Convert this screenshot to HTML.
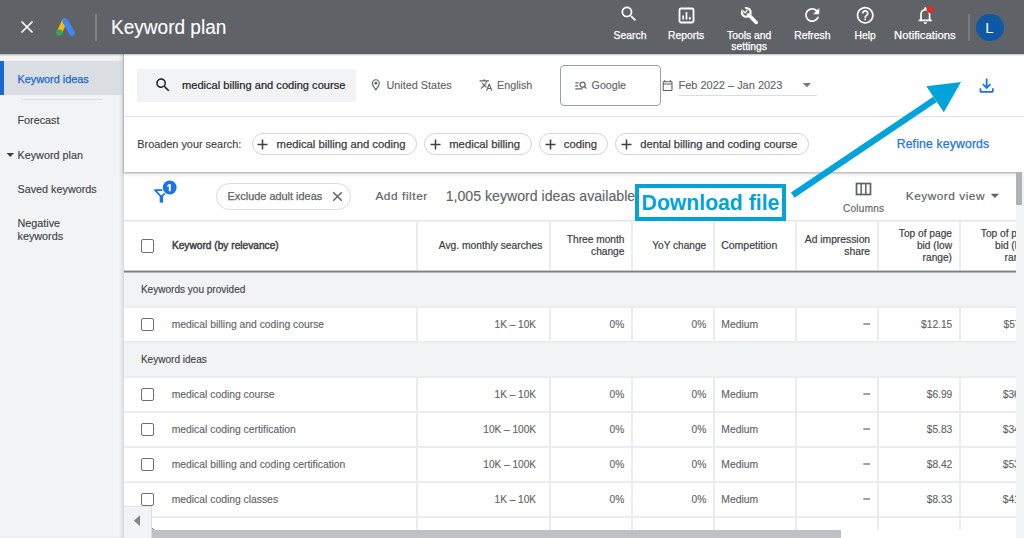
<!DOCTYPE html>
<html><head><meta charset="utf-8"><style>
html,body{margin:0;padding:0;width:1024px;height:538px;overflow:hidden;background:#fff;position:relative;font-family:'Liberation Sans', sans-serif}
.t{position:absolute;white-space:nowrap;line-height:30px;font-family:'Liberation Sans', sans-serif}
</style></head><body>
<div style="position:absolute;left:0px;top:0px;width:1024px;height:54px;background:#5f6368"></div>
<div style="position:absolute;left:0px;top:54px;width:1024px;height:2px;background:linear-gradient(rgba(60,64,67,.35),rgba(60,64,67,0));z-index:4"></div>
<svg style="position:absolute;left:19px;top:19px;" width="16" height="16" viewBox="0 0 16 16"><path d="M2.5 2.5L13.5 13.5M13.5 2.5L2.5 13.5" stroke="#fff" stroke-width="1.7" fill="none"/></svg>
<svg style="position:absolute;left:55px;top:17px;" width="22" height="20" viewBox="0 0 22 20"><path d="M9.4 4.3L4.6 15" stroke="#fbbc04" stroke-width="5.4" stroke-linecap="round"/><path d="M10.3 4.3L16.9 15.9" stroke="#4285f4" stroke-width="5.8" stroke-linecap="round"/><circle cx="4.3" cy="15.4" r="3.2" fill="#34a853"/></svg>
<div style="position:absolute;left:95px;top:14px;width:2px;height:27px;background:#7c8085"></div>
<div class="t" style="left:111px;top:12px;font-size:20px;color:#ffffff;font-weight:normal;-webkit-text-stroke:0.12px #ffffff;transform:scaleX(0.952);transform-origin:0 0;">Keyword plan</div>
<div class="t" style="left:480px;width:300px;text-align:center;top:20.5px;font-size:10.35px;color:#ffffff;font-weight:normal;-webkit-text-stroke:0.25px #ffffff;">Search</div>
<svg style="position:absolute;left:619.4px;top:4.4px;" width="20" height="20" viewBox="0 0 24 24"><path fill="#fff" d="M15.5 14h-.79l-.28-.27C15.41 12.59 16 11.11 16 9.5 16 5.91 13.09 3 9.5 3S3 5.91 3 9.5 5.91 16 9.5 16c1.61 0 3.09-.59 4.23-1.57l.27.28v.79l5 4.99L20.49 19l-4.99-5zm-6 0C7.01 14 5 11.99 5 9.5S7.01 5 9.5 5 14 7.01 14 9.5 11.99 14 9.5 14z"/></svg>
<div class="t" style="left:536.1px;width:300px;text-align:center;top:20.5px;font-size:10.35px;color:#ffffff;font-weight:normal;-webkit-text-stroke:0.25px #ffffff;">Reports</div>
<svg style="position:absolute;left:678px;top:7px;" width="17" height="17" viewBox="0 0 17 17"><rect x="1.5" y="1.5" width="14" height="14" rx="1.5" stroke="#fff" stroke-width="1.8" fill="none"/><path d="M5.2 12.5V8.5M8.5 12.5V5M11.8 12.5V10" stroke="#fff" stroke-width="1.7"/></svg>
<div class="t" style="left:599.2px;width:300px;text-align:center;top:20.5px;font-size:10.35px;color:#ffffff;font-weight:normal;-webkit-text-stroke:0.25px #ffffff;">Tools and</div>
<div class="t" style="left:599.2px;width:300px;text-align:center;top:32px;font-size:10.35px;color:#ffffff;font-weight:normal;-webkit-text-stroke:0.25px #ffffff;">settings</div>
<svg style="position:absolute;left:736px;top:3px;" width="28" height="25" viewBox="0 0 28 25"><circle cx="10.3" cy="9.4" r="4.3" stroke="#fff" stroke-width="2.3" fill="none"/><path d="M12.6 11.8L20.2 19.4" stroke="#fff" stroke-width="3.6" stroke-linecap="round"/><path d="M7.2 2.5L3.2 6.5L8.6 10.3L11 8Z" fill="#5f6368"/><path d="M5.5 6.8L9.3 9.8L11.4 6.9" stroke="#fff" stroke-width="1.3" fill="none"/></svg>
<div class="t" style="left:662.3px;width:300px;text-align:center;top:20.5px;font-size:10.35px;color:#ffffff;font-weight:normal;-webkit-text-stroke:0.25px #ffffff;">Refresh</div>
<svg style="position:absolute;left:801.7px;top:4.6px;width:14.4px;height:14.1px;left:805.3px;top:8.2px" width="18" height="18" viewBox="4 4 16 16"><path fill="#fff" d="M17.65 6.35C16.2 4.9 14.21 4 12 4c-4.42 0-7.99 3.58-7.99 8s3.57 8 7.99 8c3.73 0 6.84-2.55 7.73-6h-2.08c-.82 2.33-3.04 4-5.65 4-3.31 0-6-2.69-6-6s2.69-6 6-6c1.66 0 3.14.69 4.22 1.78L13 11h7V4l-2.35 2.35z"/></svg>
<div class="t" style="left:715.2px;width:300px;text-align:center;top:20.5px;font-size:10.35px;color:#ffffff;font-weight:normal;-webkit-text-stroke:0.25px #ffffff;">Help</div>
<svg style="position:absolute;left:855.3px;top:5.1px;" width="20.4" height="20.4" viewBox="0 0 24 24"><path fill="#fff" d="M11 18h2v-2h-2v2zm1-16C6.48 2 2 6.48 2 12s4.48 10 10 10 10-4.48 10-10S17.52 2 12 2zm0 18c-4.41 0-8-3.59-8-8s3.59-8 8-8 8 3.59 8 8-3.59 8-8 8zm0-14c-2.21 0-4 1.790-4 4h2c0-1.1.9-2 2-2s2 .9 2 2c0 2-3 1.75-3 5h2c0-2.25 3-2.5 3-5 0-2.210-1.79-4-4-4z"/></svg>
<div class="t" style="left:774.9px;width:300px;text-align:center;top:19.5px;font-size:11.3px;color:#ffffff;font-weight:normal;-webkit-text-stroke:0.25px #ffffff;">Notifications</div>
<svg style="position:absolute;left:914.6px;top:5.1px;" width="20.6" height="20.6" viewBox="0 0 24 24"><path fill="#fff" d="M12 22c1.1 0 2-.9 2-2h-4c0 1.1.89 2 2 2zm6-6v-5c0-3.07-1.64-5.64-4.5-6.32V4c0-.83-.67-1.5-1.5-1.5s-1.5.67-1.5 1.5v.68C7.630 5.36 6 7.92 6 11v5l-2 2v1h16v-1l-2-2zm-2 1H8v-6c0-2.48 1.51-4.5 4-4.5s4 2.02 4 4.5v6z"/></svg>
<svg style="position:absolute;left:925px;top:4px;" width="11" height="11" viewBox="0 0 11 11"><circle cx="5.2" cy="5.3" r="3.6" fill="#d93025"/></svg>
<div style="position:absolute;left:967.5px;top:14px;width:2.0px;height:27px;background:#777b80"></div>
<div style="position:absolute;left:976px;top:13.5px;width:27.5px;height:27.5px;background:#0f58a5;border-radius:50%"></div>
<div class="t" style="left:839.3px;width:300px;text-align:center;top:12.600000000000001px;font-size:15px;color:#ffffff;font-weight:normal;">L</div>
<div style="position:absolute;left:0px;top:54px;width:124px;height:484px;background:#f1f3f4;box-shadow:inset -3px 0 4px -2px rgba(60,64,67,.22)"></div>
<div style="position:absolute;left:0px;top:61px;width:122px;height:34px;background:#dadde1"></div>
<div style="position:absolute;left:0px;top:61px;width:3.5px;height:34px;background:#1967d2"></div>
<div class="t" style="left:17.5px;top:63.5px;font-size:10.87px;color:#1967d2;font-weight:normal;-webkit-text-stroke:0.25px #1967d2;">Keyword ideas</div>
<div style="position:absolute;left:20.5px;top:99px;width:81.5px;height:1px;background:#dadce0"></div>
<div class="t" style="left:17.5px;top:105.1px;font-size:10.8px;color:#3c4043;font-weight:normal;-webkit-text-stroke:0.12px #3c4043;">Forecast</div>
<svg style="position:absolute;left:6px;top:152px;" width="9" height="6" viewBox="0 0 9 6"><path d="M0.5 1H8L4.25 5Z" fill="#3c4043"/></svg>
<div class="t" style="left:17.5px;top:139.5px;font-size:10.8px;color:#3c4043;font-weight:normal;-webkit-text-stroke:0.12px #3c4043;">Keyword plan</div>
<div class="t" style="left:17.5px;top:173.7px;font-size:10.8px;color:#3c4043;font-weight:normal;-webkit-text-stroke:0.12px #3c4043;">Saved keywords</div>
<div class="t" style="left:17.5px;top:207.9px;font-size:10.8px;color:#3c4043;font-weight:normal;-webkit-text-stroke:0.12px #3c4043;">Negative</div>
<div class="t" style="left:17.5px;top:221.1px;font-size:10.8px;color:#3c4043;font-weight:normal;-webkit-text-stroke:0.12px #3c4043;">keywords</div>
<div style="position:absolute;left:124px;top:54px;width:900px;height:118px;background:#fff;box-shadow:0 1px 2px rgba(60,64,67,.35),0 1px 4px 1px rgba(60,64,67,.15);z-index:1"></div>
<div style="position:absolute;left:137px;top:68.5px;width:219px;height:33.5px;background:#f1f3f4;z-index:1"></div>
<svg style="position:absolute;left:154.3px;top:76.3px;z-index:2;" width="18" height="18" viewBox="0 0 24 24"><path fill="#202124" d="M15.5 14h-.79l-.28-.27C15.41 12.59 16 11.11 16 9.5 16 5.91 13.09 3 9.5 3S3 5.91 3 9.5 5.91 16 9.5 16c1.61 0 3.09-.59 4.23-1.57l.27.28v.79l5 4.99L20.49 19l-4.99-5zm-6 0C7.01 14 5 11.99 5 9.5S7.01 5 9.5 5 14 7.01 14 9.5 11.99 14 9.5 14z"/></svg>
<div class="t" style="left:182px;top:69.9px;font-size:11.1px;color:#202124;font-weight:normal;-webkit-text-stroke:0.2px #202124;z-index:2;">medical billing and coding course</div>
<svg style="position:absolute;left:368.6px;top:78.3px;z-index:2;" width="13.7" height="13.7" viewBox="0 0 24 24"><path fill="#5f6368" d="M12 2C8.13 2 5 5.13 5 9c0 5.25 7 13 7 13s7-7.75 7-13c0-3.87-3.13-7-7-7zM7 9c0-2.76 2.24-5 5-5s5 2.24 5 5c0 2.88-2.88 7.19-5 9.88C9.92 16.210 7 11.85 7 9z"/><circle cx="12" cy="9" r="2.5" fill="#5f6368"/></svg>
<div class="t" style="left:386.4px;top:70.3px;font-size:10.89px;color:#5f6368;font-weight:normal;-webkit-text-stroke:0.12px #5f6368;z-index:2;">United States</div>
<svg style="position:absolute;left:479.4px;top:78.3px;z-index:2;" width="14" height="14" viewBox="0 0 24 24"><path fill="#5f6368" d="M12.87 15.07l-2.54-2.51.03-.03c1.74-1.94 2.98-4.17 3.71-6.53H17V4h-7V2H8v2H1v1.99h11.17C11.5 7.92 10.44 9.75 9 11.35 8.07 10.32 7.3 9.19 6.69 8h-2c.73 1.63 1.73 3.17 2.98 4.56l-5.09 5.02L4 19l5-5 3.11 3.110.76-2.04zM18.5 10h-2L12 22h2l1.12-3h4.75L21 22h2l-4.5-12zm-2.62 7l1.62-4.33L19.12 17h-3.240z"/></svg>
<div class="t" style="left:497.1px;top:70.3px;font-size:10.73px;color:#5f6368;font-weight:normal;-webkit-text-stroke:0.12px #5f6368;z-index:2;">English</div>
<div style="position:absolute;left:560px;top:65px;width:101px;height:40.599999999999994px;border:1px solid #9aa0a6;border-radius:4px;box-sizing:border-box;z-index:2"></div>
<svg style="position:absolute;left:574px;top:80px;z-index:2;" width="14" height="11" viewBox="0 0 14 11"><path d="M1.3 2.9H4.6M1.3 5.85H4.2M1.3 8.8H8.6" stroke="#5f6368" stroke-width="1.2"/><circle cx="8.6" cy="4.7" r="2.5" stroke="#5f6368" stroke-width="1.25" fill="none"/><path d="M10.3 6.4L12.4 8.6" stroke="#5f6368" stroke-width="1.3"/></svg>
<div class="t" style="left:591.6px;top:70.3px;font-size:10.67px;color:#5f6368;font-weight:normal;-webkit-text-stroke:0.12px #5f6368;z-index:2;">Google</div>
<svg style="position:absolute;left:661.4px;top:78.5px;z-index:2;" width="13.2" height="13.2" viewBox="0 0 24 24"><path fill="#5f6368" d="M19 4h-1V2h-2v2H8V2H6v2H5c-1.11 0-1.99.9-1.99 2L3 20c0 1.1.89 2 2 2h14c1.1 0 2-.9 2-2V6c0-1.1-.9-2-2-2zm0 16H5V10h14v10zm0-12H5V6h14v2z"/></svg>
<div class="t" style="left:678.5px;top:70.3px;font-size:10.99px;color:#5f6368;font-weight:normal;-webkit-text-stroke:0.12px #5f6368;z-index:2;">Feb 2022 – Jan 2023</div>
<svg style="position:absolute;left:802px;top:82px;z-index:2;" width="10" height="6" viewBox="0 0 10 6"><path d="M0.8 1H9L4.9 5.2Z" fill="#757575"/></svg>
<div style="position:absolute;left:678.5px;top:95px;width:138.5px;height:1px;background:#dadce0;z-index:2"></div>
<svg style="position:absolute;left:975.8px;top:74.6px;z-index:2;" width="21.3" height="21.3" viewBox="0 -960 960 960"><path fill="#1a73e8" d="M480-320 280-520l56-58 104 104v-326h80v326l104-104 56 58-200 200ZM240-160q-33 0-56.5-23.5T160-240v-120h80v120h480v-120h80v120q0 33-23.5 56.5T720-160H240Z"/></svg>
<div style="position:absolute;left:124px;top:116px;width:900px;height:1px;background:#e0e2e6;z-index:2"></div>
<div class="t" style="left:137.3px;top:129px;font-size:10.88px;color:#3c4043;font-weight:normal;-webkit-text-stroke:0.12px #3c4043;z-index:2;">Broaden your search:</div>
<div style="position:absolute;left:251.6px;top:133.3px;width:165.50000000000003px;height:22.099999999999994px;border:1px solid #d3d5d9;border-radius:12px;box-sizing:border-box;z-index:2"></div>
<svg style="position:absolute;left:257.09999999999997px;top:138.6px;z-index:2;" width="12" height="12" viewBox="0 0 12 12"><path d="M5.5 0.5V10.5M0.5 5.5H10.5" stroke="#3c4043" stroke-width="1.5"/></svg>
<div class="t" style="left:276.5px;top:128.5px;font-size:11.28px;color:#3c4043;font-weight:normal;-webkit-text-stroke:0.25px #3c4043;z-index:2;">medical billing and coding</div>
<div style="position:absolute;left:424.2px;top:133.3px;width:107.59999999999997px;height:22.099999999999994px;border:1px solid #d3d5d9;border-radius:12px;box-sizing:border-box;z-index:2"></div>
<svg style="position:absolute;left:429.9px;top:138.6px;z-index:2;" width="12" height="12" viewBox="0 0 12 12"><path d="M5.5 0.5V10.5M0.5 5.5H10.5" stroke="#3c4043" stroke-width="1.5"/></svg>
<div class="t" style="left:449.2px;top:128.5px;font-size:11.3px;color:#3c4043;font-weight:normal;-webkit-text-stroke:0.25px #3c4043;z-index:2;">medical billing</div>
<div style="position:absolute;left:539px;top:133.3px;width:69.39999999999998px;height:22.099999999999994px;border:1px solid #d3d5d9;border-radius:12px;box-sizing:border-box;z-index:2"></div>
<svg style="position:absolute;left:544.6px;top:138.6px;z-index:2;" width="12" height="12" viewBox="0 0 12 12"><path d="M5.5 0.5V10.5M0.5 5.5H10.5" stroke="#3c4043" stroke-width="1.5"/></svg>
<div class="t" style="left:563.8px;top:128.5px;font-size:11.27px;color:#3c4043;font-weight:normal;-webkit-text-stroke:0.25px #3c4043;z-index:2;">coding</div>
<div style="position:absolute;left:615.2px;top:133.3px;width:193.39999999999998px;height:22.099999999999994px;border:1px solid #d3d5d9;border-radius:12px;box-sizing:border-box;z-index:2"></div>
<svg style="position:absolute;left:620.7px;top:138.6px;z-index:2;" width="12" height="12" viewBox="0 0 12 12"><path d="M5.5 0.5V10.5M0.5 5.5H10.5" stroke="#3c4043" stroke-width="1.5"/></svg>
<div class="t" style="left:640.2px;top:128.5px;font-size:11.22px;color:#3c4043;font-weight:normal;-webkit-text-stroke:0.25px #3c4043;z-index:2;">dental billing and coding course</div>
<div class="t" style="left:896.7px;top:129px;font-size:12.2px;color:#1a73e8;font-weight:normal;-webkit-text-stroke:0.25px #1a73e8;letter-spacing:0.17px;z-index:2;">Refine keywords</div>
<div style="position:absolute;left:124px;top:172px;width:892px;height:366px;background:#fff"></div>
<svg style="position:absolute;left:148px;top:178px;" width="34" height="30" viewBox="0 0 34 30"><path d="M7 12.2H20L13.4 18.8Z" stroke="#1a73e8" stroke-width="1.8" fill="none" stroke-linejoin="round"/><rect x="11.7" y="18" width="3.4" height="6.6" fill="#1a73e8"/><circle cx="21.7" cy="9.5" r="7.9" fill="#fff"/><circle cx="21.7" cy="9.5" r="6.9" fill="#1a73e8"/><path d="M20.8 13.3V8.3L19.1 8.9V7.4L21.1 6.1H22.8V13.3Z" fill="#fff"/></svg>
<div style="position:absolute;left:216px;top:183px;width:134.5px;height:27px;border:1px solid #dadce0;border-radius:14px;box-sizing:border-box"></div>
<div class="t" style="left:227.6px;top:180.5px;font-size:10.92px;color:#5f6368;font-weight:normal;-webkit-text-stroke:0.25px #5f6368;">Exclude adult ideas</div>
<svg style="position:absolute;left:332px;top:191px;" width="11" height="11" viewBox="0 0 11 11"><path d="M1.2 1.2L9.8 9.8M9.8 1.2L1.2 9.8" stroke="#5f6368" stroke-width="1.5"/></svg>
<div class="t" style="left:375.4px;top:181px;font-size:11.8px;color:#5f6368;font-weight:normal;-webkit-text-stroke:0.2px #5f6368;letter-spacing:0.59px;">Add filter</div>
<div class="t" style="left:445.7px;top:181px;font-size:14.15px;color:#5f6368;font-weight:normal;-webkit-text-stroke:0.12px #5f6368;">1,005 keyword ideas available</div>
<svg style="position:absolute;left:855px;top:182px;" width="17" height="14" viewBox="0 0 17 14"><rect x="1.5" y="1.5" width="14" height="11" stroke="#5f6368" stroke-width="1.7" fill="none"/><path d="M6.2 1.5V12.5M10.8 1.5V12.5" stroke="#5f6368" stroke-width="1.5"/></svg>
<div class="t" style="left:713.7px;width:300px;text-align:center;top:193.8px;font-size:10px;color:#5f6368;font-weight:normal;-webkit-text-stroke:0.15px #5f6368;letter-spacing:0.27px;">Columns</div>
<div class="t" style="left:905.8px;top:181px;font-size:11.8px;color:#5f6368;font-weight:normal;-webkit-text-stroke:0.2px #5f6368;letter-spacing:0.53px;">Keyword view</div>
<svg style="position:absolute;left:990px;top:193px;" width="10" height="6" viewBox="0 0 10 6"><path d="M0.8 0.8H9L4.9 5Z" fill="#5f6368"/></svg>
<div style="position:absolute;left:124px;top:220px;width:892px;height:1px;background:#e3e4e8"></div>
<div style="position:absolute;left:124px;top:221px;width:892px;height:1px;background:#f0f1f3"></div>
<div style="position:absolute;left:1015.5px;top:172px;width:8.5px;height:366px;background:#f1f3f4"></div>
<div style="position:absolute;left:1015.5px;top:172px;width:6.5px;height:33px;background:#b0b2b5"></div>
<div style="position:absolute;left:416px;top:222px;width:2px;height:48px;background:#ebecef"></div>
<div style="position:absolute;left:549px;top:222px;width:2px;height:48px;background:#ebecef"></div>
<div style="position:absolute;left:631px;top:222px;width:2px;height:48px;background:#ebecef"></div>
<div style="position:absolute;left:713px;top:222px;width:2px;height:48px;background:#ebecef"></div>
<div style="position:absolute;left:795px;top:222px;width:2px;height:48px;background:#ebecef"></div>
<div style="position:absolute;left:877px;top:222px;width:2px;height:48px;background:#ebecef"></div>
<div style="position:absolute;left:959px;top:222px;width:2px;height:48px;background:#ebecef"></div>
<div style="position:absolute;left:141px;top:239.2px;width:13.400000000000006px;height:13.400000000000006px;border:1.8px solid #6f7174;border-radius:2px;box-sizing:border-box"></div>
<div class="t" style="left:171.9px;top:230.9px;font-size:10.18px;color:#3c4043;font-weight:normal;-webkit-text-stroke:0.45px #3c4043;">Keyword (by relevance)</div>
<div class="t" style="right:481.70000000000005px;text-align:right;top:231.4px;font-size:10.25px;color:#3c4043;font-weight:normal;-webkit-text-stroke:0.2px #3c4043;">Avg. monthly searches</div>
<div class="t" style="right:399.6px;text-align:right;top:225.3px;font-size:10.16px;color:#3c4043;font-weight:normal;-webkit-text-stroke:0.2px #3c4043;">Three month</div>
<div class="t" style="right:399.6px;text-align:right;top:236.8px;font-size:10.16px;color:#3c4043;font-weight:normal;-webkit-text-stroke:0.2px #3c4043;">change</div>
<div class="t" style="right:317.9px;text-align:right;top:231.4px;font-size:10.1px;color:#3c4043;font-weight:normal;-webkit-text-stroke:0.2px #3c4043;">YoY change</div>
<div class="t" style="left:721.2px;top:230.4px;font-size:10.5px;color:#3c4043;font-weight:normal;-webkit-text-stroke:0.2px #3c4043;">Competition</div>
<div class="t" style="right:153.89999999999998px;text-align:right;top:225.4px;font-size:10.32px;color:#3c4043;font-weight:normal;-webkit-text-stroke:0.2px #3c4043;">Ad impression</div>
<div class="t" style="right:153.89999999999998px;text-align:right;top:236.9px;font-size:10.32px;color:#3c4043;font-weight:normal;-webkit-text-stroke:0.2px #3c4043;">share</div>
<div class="t" style="right:72px;text-align:right;top:219.1px;font-size:10.18px;color:#3c4043;font-weight:normal;-webkit-text-stroke:0.2px #3c4043;">Top of page</div>
<div class="t" style="right:72px;text-align:right;top:231px;font-size:10.18px;color:#3c4043;font-weight:normal;-webkit-text-stroke:0.2px #3c4043;">bid (low</div>
<div class="t" style="right:72px;text-align:right;top:243.10000000000002px;font-size:10.18px;color:#3c4043;font-weight:normal;-webkit-text-stroke:0.2px #3c4043;">range)</div>
<div class="t" style="right:-10px;text-align:right;top:219.1px;font-size:10.18px;color:#3c4043;font-weight:normal;-webkit-text-stroke:0.2px #3c4043;">Top of page</div>
<div class="t" style="right:-10px;text-align:right;top:231px;font-size:10.18px;color:#3c4043;font-weight:normal;-webkit-text-stroke:0.2px #3c4043;">bid (high</div>
<div class="t" style="right:-10px;text-align:right;top:243.10000000000002px;font-size:10.18px;color:#3c4043;font-weight:normal;-webkit-text-stroke:0.2px #3c4043;">range)</div>
<div style="position:absolute;left:124px;top:270px;width:892px;height:3px;background:linear-gradient(#c9cbce 0 1px,#7b7f84 1px 2px,#b3b6b9 2px 3px)"></div>
<div style="position:absolute;left:124px;top:273px;width:892px;height:33px;background:#f1f3f4"></div>
<div class="t" style="left:140.9px;top:275.2px;font-size:10.06px;color:#3c4043;font-weight:normal;-webkit-text-stroke:0.12px #3c4043;">Keywords you provided</div>
<div style="position:absolute;left:124px;top:306px;width:892px;height:2px;background:#ebecef"></div>
<div style="position:absolute;left:416px;top:308px;width:2px;height:33px;background:#ebecef"></div>
<div style="position:absolute;left:549px;top:308px;width:2px;height:33px;background:#ebecef"></div>
<div style="position:absolute;left:631px;top:308px;width:2px;height:33px;background:#ebecef"></div>
<div style="position:absolute;left:713px;top:308px;width:2px;height:33px;background:#ebecef"></div>
<div style="position:absolute;left:795px;top:308px;width:2px;height:33px;background:#ebecef"></div>
<div style="position:absolute;left:877px;top:308px;width:2px;height:33px;background:#ebecef"></div>
<div style="position:absolute;left:959px;top:308px;width:2px;height:33px;background:#ebecef"></div>
<div style="position:absolute;left:141px;top:317.7px;width:13.400000000000006px;height:13.399999999999977px;border:1.8px solid #6f7174;border-radius:2px;box-sizing:border-box"></div>
<div class="t" style="left:171.7px;top:309.8px;font-size:10.35px;color:#5f6368;font-weight:normal;-webkit-text-stroke:0.12px #5f6368;">medical billing and coding course</div>
<div class="t" style="right:488px;text-align:right;top:309.8px;font-size:10.09px;color:#5f6368;font-weight:normal;-webkit-text-stroke:0.12px #5f6368;">1K – 10K</div>
<div class="t" style="right:399.70000000000005px;text-align:right;top:309.8px;font-size:10.2px;color:#5f6368;font-weight:normal;-webkit-text-stroke:0.12px #5f6368;">0%</div>
<div class="t" style="right:317.70000000000005px;text-align:right;top:309.8px;font-size:10.2px;color:#5f6368;font-weight:normal;-webkit-text-stroke:0.12px #5f6368;">0%</div>
<div class="t" style="left:721.3px;top:309.8px;font-size:10.35px;color:#5f6368;font-weight:normal;-webkit-text-stroke:0.12px #5f6368;">Medium</div>
<svg style="position:absolute;left:860px;top:321px;" width="14" height="6" viewBox="0 0 14 6"><path d="M3.3 3H10.1" stroke="#5f6368" stroke-width="1.2"/></svg>
<div class="t" style="right:71.70000000000005px;text-align:right;top:309.8px;font-size:10.23px;color:#5f6368;font-weight:normal;-webkit-text-stroke:0.12px #5f6368;">$12.15</div>
<div class="t" style="right:-10px;text-align:right;top:309.8px;font-size:10.23px;color:#5f6368;font-weight:normal;-webkit-text-stroke:0.12px #5f6368;">$57.11</div>
<div style="position:absolute;left:124px;top:342px;width:892px;height:34px;background:#f1f3f4"></div>
<div class="t" style="left:140.9px;top:344.6px;font-size:10.06px;color:#3c4043;font-weight:normal;-webkit-text-stroke:0.12px #3c4043;">Keyword ideas</div>
<div style="position:absolute;left:124px;top:341px;width:892px;height:2px;background:#ebecef"></div>
<div style="position:absolute;left:124px;top:376px;width:892px;height:2px;background:#ebecef"></div>
<div style="position:absolute;left:416px;top:378px;width:2px;height:33px;background:#ebecef"></div>
<div style="position:absolute;left:549px;top:378px;width:2px;height:33px;background:#ebecef"></div>
<div style="position:absolute;left:631px;top:378px;width:2px;height:33px;background:#ebecef"></div>
<div style="position:absolute;left:713px;top:378px;width:2px;height:33px;background:#ebecef"></div>
<div style="position:absolute;left:795px;top:378px;width:2px;height:33px;background:#ebecef"></div>
<div style="position:absolute;left:877px;top:378px;width:2px;height:33px;background:#ebecef"></div>
<div style="position:absolute;left:959px;top:378px;width:2px;height:33px;background:#ebecef"></div>
<div style="position:absolute;left:141px;top:387.7px;width:13.400000000000006px;height:13.399999999999977px;border:1.8px solid #6f7174;border-radius:2px;box-sizing:border-box"></div>
<div class="t" style="left:171.7px;top:379.8px;font-size:10.35px;color:#5f6368;font-weight:normal;-webkit-text-stroke:0.12px #5f6368;">medical coding course</div>
<div class="t" style="right:488px;text-align:right;top:379.8px;font-size:10.09px;color:#5f6368;font-weight:normal;-webkit-text-stroke:0.12px #5f6368;">1K – 10K</div>
<div class="t" style="right:399.70000000000005px;text-align:right;top:379.8px;font-size:10.2px;color:#5f6368;font-weight:normal;-webkit-text-stroke:0.12px #5f6368;">0%</div>
<div class="t" style="right:317.70000000000005px;text-align:right;top:379.8px;font-size:10.2px;color:#5f6368;font-weight:normal;-webkit-text-stroke:0.12px #5f6368;">0%</div>
<div class="t" style="left:721.3px;top:379.8px;font-size:10.35px;color:#5f6368;font-weight:normal;-webkit-text-stroke:0.12px #5f6368;">Medium</div>
<svg style="position:absolute;left:860px;top:391px;" width="14" height="6" viewBox="0 0 14 6"><path d="M3.3 3H10.1" stroke="#5f6368" stroke-width="1.2"/></svg>
<div class="t" style="right:71.70000000000005px;text-align:right;top:379.8px;font-size:10.23px;color:#5f6368;font-weight:normal;-webkit-text-stroke:0.12px #5f6368;">$6.99</div>
<div class="t" style="right:-10px;text-align:right;top:379.8px;font-size:10.23px;color:#5f6368;font-weight:normal;-webkit-text-stroke:0.12px #5f6368;">$36.02</div>
<div style="position:absolute;left:124px;top:411px;width:892px;height:2px;background:#ebecef"></div>
<div style="position:absolute;left:416px;top:413px;width:2px;height:33px;background:#ebecef"></div>
<div style="position:absolute;left:549px;top:413px;width:2px;height:33px;background:#ebecef"></div>
<div style="position:absolute;left:631px;top:413px;width:2px;height:33px;background:#ebecef"></div>
<div style="position:absolute;left:713px;top:413px;width:2px;height:33px;background:#ebecef"></div>
<div style="position:absolute;left:795px;top:413px;width:2px;height:33px;background:#ebecef"></div>
<div style="position:absolute;left:877px;top:413px;width:2px;height:33px;background:#ebecef"></div>
<div style="position:absolute;left:959px;top:413px;width:2px;height:33px;background:#ebecef"></div>
<div style="position:absolute;left:141px;top:422.7px;width:13.400000000000006px;height:13.399999999999977px;border:1.8px solid #6f7174;border-radius:2px;box-sizing:border-box"></div>
<div class="t" style="left:171.7px;top:414.8px;font-size:10.35px;color:#5f6368;font-weight:normal;-webkit-text-stroke:0.12px #5f6368;">medical coding certification</div>
<div class="t" style="right:488px;text-align:right;top:414.8px;font-size:10.09px;color:#5f6368;font-weight:normal;-webkit-text-stroke:0.12px #5f6368;">10K – 100K</div>
<div class="t" style="right:399.70000000000005px;text-align:right;top:414.8px;font-size:10.2px;color:#5f6368;font-weight:normal;-webkit-text-stroke:0.12px #5f6368;">0%</div>
<div class="t" style="right:317.70000000000005px;text-align:right;top:414.8px;font-size:10.2px;color:#5f6368;font-weight:normal;-webkit-text-stroke:0.12px #5f6368;">0%</div>
<div class="t" style="left:721.3px;top:414.8px;font-size:10.35px;color:#5f6368;font-weight:normal;-webkit-text-stroke:0.12px #5f6368;">Medium</div>
<svg style="position:absolute;left:860px;top:426px;" width="14" height="6" viewBox="0 0 14 6"><path d="M3.3 3H10.1" stroke="#5f6368" stroke-width="1.2"/></svg>
<div class="t" style="right:71.70000000000005px;text-align:right;top:414.8px;font-size:10.23px;color:#5f6368;font-weight:normal;-webkit-text-stroke:0.12px #5f6368;">$5.83</div>
<div class="t" style="right:-10px;text-align:right;top:414.8px;font-size:10.23px;color:#5f6368;font-weight:normal;-webkit-text-stroke:0.12px #5f6368;">$34.40</div>
<div style="position:absolute;left:124px;top:446px;width:892px;height:2px;background:#ebecef"></div>
<div style="position:absolute;left:416px;top:448px;width:2px;height:33px;background:#ebecef"></div>
<div style="position:absolute;left:549px;top:448px;width:2px;height:33px;background:#ebecef"></div>
<div style="position:absolute;left:631px;top:448px;width:2px;height:33px;background:#ebecef"></div>
<div style="position:absolute;left:713px;top:448px;width:2px;height:33px;background:#ebecef"></div>
<div style="position:absolute;left:795px;top:448px;width:2px;height:33px;background:#ebecef"></div>
<div style="position:absolute;left:877px;top:448px;width:2px;height:33px;background:#ebecef"></div>
<div style="position:absolute;left:959px;top:448px;width:2px;height:33px;background:#ebecef"></div>
<div style="position:absolute;left:141px;top:457.7px;width:13.400000000000006px;height:13.399999999999977px;border:1.8px solid #6f7174;border-radius:2px;box-sizing:border-box"></div>
<div class="t" style="left:171.7px;top:449.8px;font-size:10.35px;color:#5f6368;font-weight:normal;-webkit-text-stroke:0.12px #5f6368;">medical billing and coding certification</div>
<div class="t" style="right:488px;text-align:right;top:449.8px;font-size:10.09px;color:#5f6368;font-weight:normal;-webkit-text-stroke:0.12px #5f6368;">10K – 100K</div>
<div class="t" style="right:399.70000000000005px;text-align:right;top:449.8px;font-size:10.2px;color:#5f6368;font-weight:normal;-webkit-text-stroke:0.12px #5f6368;">0%</div>
<div class="t" style="right:317.70000000000005px;text-align:right;top:449.8px;font-size:10.2px;color:#5f6368;font-weight:normal;-webkit-text-stroke:0.12px #5f6368;">0%</div>
<div class="t" style="left:721.3px;top:449.8px;font-size:10.35px;color:#5f6368;font-weight:normal;-webkit-text-stroke:0.12px #5f6368;">Medium</div>
<svg style="position:absolute;left:860px;top:461px;" width="14" height="6" viewBox="0 0 14 6"><path d="M3.3 3H10.1" stroke="#5f6368" stroke-width="1.2"/></svg>
<div class="t" style="right:71.70000000000005px;text-align:right;top:449.8px;font-size:10.23px;color:#5f6368;font-weight:normal;-webkit-text-stroke:0.12px #5f6368;">$8.42</div>
<div class="t" style="right:-10px;text-align:right;top:449.8px;font-size:10.23px;color:#5f6368;font-weight:normal;-webkit-text-stroke:0.12px #5f6368;">$53.01</div>
<div style="position:absolute;left:124px;top:481px;width:892px;height:2px;background:#ebecef"></div>
<div style="position:absolute;left:416px;top:483px;width:2px;height:33px;background:#ebecef"></div>
<div style="position:absolute;left:549px;top:483px;width:2px;height:33px;background:#ebecef"></div>
<div style="position:absolute;left:631px;top:483px;width:2px;height:33px;background:#ebecef"></div>
<div style="position:absolute;left:713px;top:483px;width:2px;height:33px;background:#ebecef"></div>
<div style="position:absolute;left:795px;top:483px;width:2px;height:33px;background:#ebecef"></div>
<div style="position:absolute;left:877px;top:483px;width:2px;height:33px;background:#ebecef"></div>
<div style="position:absolute;left:959px;top:483px;width:2px;height:33px;background:#ebecef"></div>
<div style="position:absolute;left:141px;top:492.7px;width:13.400000000000006px;height:13.399999999999977px;border:1.8px solid #6f7174;border-radius:2px;box-sizing:border-box"></div>
<div class="t" style="left:171.7px;top:484.8px;font-size:10.35px;color:#5f6368;font-weight:normal;-webkit-text-stroke:0.12px #5f6368;">medical coding classes</div>
<div class="t" style="right:488px;text-align:right;top:484.8px;font-size:10.09px;color:#5f6368;font-weight:normal;-webkit-text-stroke:0.12px #5f6368;">1K – 10K</div>
<div class="t" style="right:399.70000000000005px;text-align:right;top:484.8px;font-size:10.2px;color:#5f6368;font-weight:normal;-webkit-text-stroke:0.12px #5f6368;">0%</div>
<div class="t" style="right:317.70000000000005px;text-align:right;top:484.8px;font-size:10.2px;color:#5f6368;font-weight:normal;-webkit-text-stroke:0.12px #5f6368;">0%</div>
<div class="t" style="left:721.3px;top:484.8px;font-size:10.35px;color:#5f6368;font-weight:normal;-webkit-text-stroke:0.12px #5f6368;">Medium</div>
<svg style="position:absolute;left:860px;top:496px;" width="14" height="6" viewBox="0 0 14 6"><path d="M3.3 3H10.1" stroke="#5f6368" stroke-width="1.2"/></svg>
<div class="t" style="right:71.70000000000005px;text-align:right;top:484.8px;font-size:10.23px;color:#5f6368;font-weight:normal;-webkit-text-stroke:0.12px #5f6368;">$8.33</div>
<div class="t" style="right:-10px;text-align:right;top:484.8px;font-size:10.23px;color:#5f6368;font-weight:normal;-webkit-text-stroke:0.12px #5f6368;">$41.20</div>
<div style="position:absolute;left:124px;top:516px;width:892px;height:2px;background:#ebecef"></div>
<div style="position:absolute;left:416px;top:518px;width:2px;height:33px;background:#ebecef"></div>
<div style="position:absolute;left:549px;top:518px;width:2px;height:33px;background:#ebecef"></div>
<div style="position:absolute;left:631px;top:518px;width:2px;height:33px;background:#ebecef"></div>
<div style="position:absolute;left:713px;top:518px;width:2px;height:33px;background:#ebecef"></div>
<div style="position:absolute;left:795px;top:518px;width:2px;height:33px;background:#ebecef"></div>
<div style="position:absolute;left:877px;top:518px;width:2px;height:33px;background:#ebecef"></div>
<div style="position:absolute;left:959px;top:518px;width:2px;height:33px;background:#ebecef"></div>
<div style="position:absolute;left:141px;top:527.7px;width:13.400000000000006px;height:13.399999999999977px;border:1.8px solid #6f7174;border-radius:2px;box-sizing:border-box"></div>
<div class="t" style="left:171.7px;top:519.8px;font-size:10.35px;color:#5f6368;font-weight:normal;-webkit-text-stroke:0.12px #5f6368;"></div>
<div class="t" style="right:488px;text-align:right;top:519.8px;font-size:10.09px;color:#5f6368;font-weight:normal;-webkit-text-stroke:0.12px #5f6368;"></div>
<div class="t" style="right:399.70000000000005px;text-align:right;top:519.8px;font-size:10.2px;color:#5f6368;font-weight:normal;-webkit-text-stroke:0.12px #5f6368;">0%</div>
<div class="t" style="right:317.70000000000005px;text-align:right;top:519.8px;font-size:10.2px;color:#5f6368;font-weight:normal;-webkit-text-stroke:0.12px #5f6368;">0%</div>
<div class="t" style="left:721.3px;top:519.8px;font-size:10.35px;color:#5f6368;font-weight:normal;-webkit-text-stroke:0.12px #5f6368;">Medium</div>
<div class="t" style="right:71.70000000000005px;text-align:right;top:519.8px;font-size:10.23px;color:#5f6368;font-weight:normal;-webkit-text-stroke:0.12px #5f6368;"></div>
<div class="t" style="right:-10px;text-align:right;top:519.8px;font-size:10.23px;color:#5f6368;font-weight:normal;-webkit-text-stroke:0.12px #5f6368;"></div>
<div style="position:absolute;left:124px;top:529.5px;width:892px;height:8.5px;background:#fff"></div>
<div style="position:absolute;left:151.4px;top:529.5px;width:689.2px;height:8.5px;background:#bdc1c6"></div>
<div style="position:absolute;left:124px;top:506px;width:28px;height:32px;background:#f1f3f4;border-top:1px solid #e3e5e8;border-right:1px solid #dcdee2;box-sizing:border-box"></div>
<svg style="position:absolute;left:133px;top:515px;" width="8" height="12" viewBox="0 0 8 12"><path d="M7 0.2V11.1L0.9 5.65Z" fill="#80868b"/></svg>
<div style="position:absolute;left:1015.5px;top:172px;width:8.5px;height:366px;background:#f1f3f4;z-index:3"></div>
<div style="position:absolute;left:1015.5px;top:172px;width:6.5px;height:33px;background:#b0b2b5;z-index:3"></div>
<div style="position:absolute;left:635.3px;top:183.6px;width:150.70000000000005px;height:37.099999999999994px;border:4.6px solid #02a3da;background:#fff;box-sizing:border-box;z-index:5"></div>
<div class="t" style="left:641.6px;top:188.2px;font-size:21.2px;color:#02a3da;font-weight:bold;z-index:6;">Download file</div>
<svg style="position:absolute;left:0px;top:0px;z-index:7;pointer-events:none" width="1024" height="538" viewBox="0 0 1024 538"><path d="M792.7 195.1L935 99.3" stroke="#02a3da" stroke-width="6.3" fill="none"/><path d="M961 82.1L926.3 86.3L943.8 112.2Z" fill="#02a3da"/></svg>
</body></html>
